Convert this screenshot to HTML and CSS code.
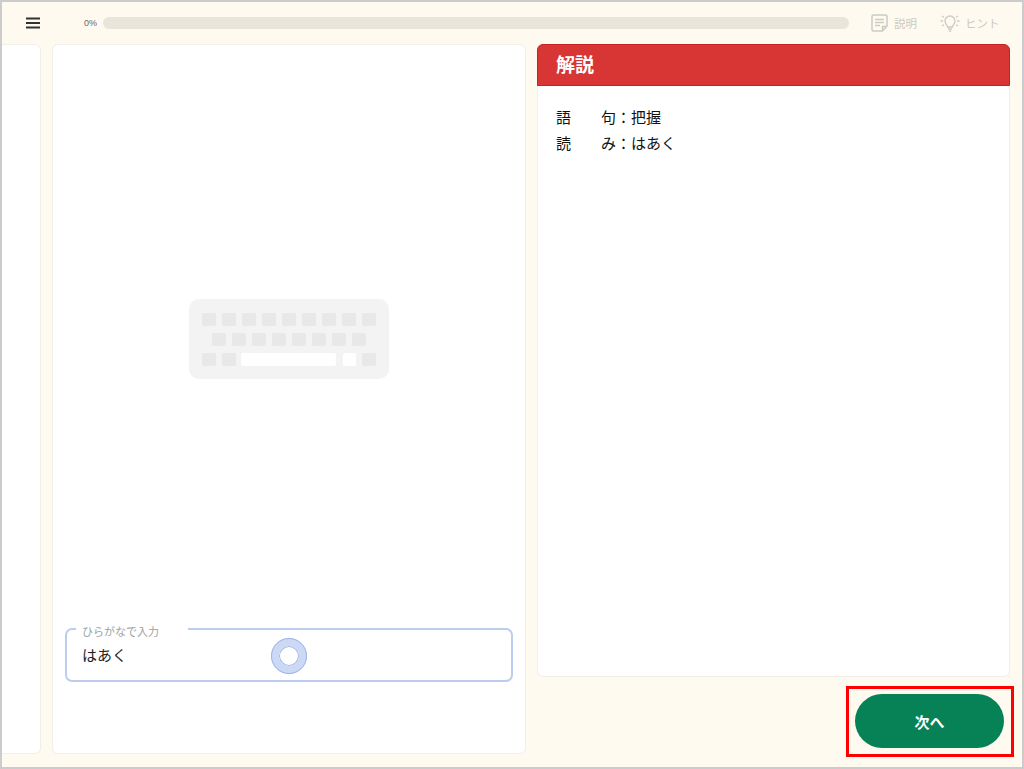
FILE: index.html
```html
<!DOCTYPE html>
<html lang="ja">
<head>
  <meta charset="UTF-8">
  <meta name="viewport" content="width=device-width, initial-scale=1.0">
  <title>解説</title>
  <link rel="stylesheet" href="styles.css">
</head>
<body>
  <div class="screen">
    <header class="top-bar">
      <button class="menu-button" aria-label="メニュー">
        <svg width="14" height="12" viewBox="0 0 14 12"><path d="M0 1.500h14M0 6h14M0 10.500h14" stroke="#333" stroke-width="1.800" fill="none"/></svg>
      </button>
      <span class="progress-label">0%</span>
      <div class="progress-track"></div>
      <div class="tool tool-note">
        <svg width="17" height="18" viewBox="0 0 17 18" fill="none" stroke="#cbcbc2" stroke-width="1.500"><path d="M2.500 1h12a1.500 1.500 0 0 1 1.500 1.500V12l-4.500 5H2.500A1.500 1.500 0 0 1 1 15.500v-13A1.500 1.500 0 0 1 2.500 1z"/><path d="M4 5.500h9M4 8.500h9M4 11.500h5"/><path d="M11.500 17v-4.500H16"/></svg>
        <span>説明</span>
      </div>
      <div class="tool tool-hint">
        <svg width="20" height="18" viewBox="0 0 20 18" fill="none" stroke="#cbcbc2" stroke-width="1.300"><path d="M7.500 13c0-2-2.500-3-2.500-6a5 5 0 0 1 10 0c0 3-2.500 4-2.500 6z"/><path d="M8 15h4M8.800 17h2.400" stroke-width="1.500"/><path d="M0.500 7h2.500M17 7h2.500M2 2l2 1.300M18 2l-2 1.300M2 12l2-1.300M18 12l-2-1.300"/></svg>
        <span>ヒント</span>
      </div>
    </header>

    <main class="content">
      <section class="panel panel-prev"></section>

      <section class="panel panel-input">
        <div class="keyboard-area">
          <svg width="200" height="80" viewBox="0 0 200 80">
            <rect width="200" height="80" rx="10" fill="#f3f3f3"/>
            <g fill="#e8e8e8">
              <rect x="13" y="14" width="14" height="13" rx="2"/>
              <rect x="33" y="14" width="14" height="13" rx="2"/>
              <rect x="53" y="14" width="14" height="13" rx="2"/>
              <rect x="73" y="14" width="14" height="13" rx="2"/>
              <rect x="93" y="14" width="14" height="13" rx="2"/>
              <rect x="113" y="14" width="14" height="13" rx="2"/>
              <rect x="133" y="14" width="14" height="13" rx="2"/>
              <rect x="153" y="14" width="14" height="13" rx="2"/>
              <rect x="173" y="14" width="14" height="13" rx="2"/>
              <rect x="23" y="34" width="14" height="13" rx="2"/>
              <rect x="43" y="34" width="14" height="13" rx="2"/>
              <rect x="63" y="34" width="14" height="13" rx="2"/>
              <rect x="83" y="34" width="14" height="13" rx="2"/>
              <rect x="103" y="34" width="14" height="13" rx="2"/>
              <rect x="123" y="34" width="14" height="13" rx="2"/>
              <rect x="143" y="34" width="14" height="13" rx="2"/>
              <rect x="163" y="34" width="14" height="13" rx="2"/>
              <rect x="13" y="54" width="14" height="13" rx="2"/>
              <rect x="33" y="54" width="14" height="13" rx="2"/>
              <rect x="173" y="54" width="14" height="13" rx="2"/>
            </g>
            <rect x="52" y="54" width="95" height="13" rx="2" fill="#fff"/>
            <rect x="154" y="54" width="13" height="13" rx="2" fill="#fff"/>
          </svg>
        </div>
        <fieldset class="answer-field">
          <legend>ひらがなで入力</legend>
          <div class="answer-text">はあく</div>
          <span class="touch-point"></span>
        </fieldset>
      </section>

      <div class="side-column">
        <section class="panel panel-explain">
          <h2>解説</h2>
          <div class="explain-body">
            <p>語　　句：把握</p>
            <p>読　　み：はあく</p>
          </div>
        </section>
        <div class="next-row">
          <div class="next-highlight">
            <button class="next-button">次へ</button>
          </div>
        </div>
      </div>
    </main>
  </div>
</body>
</html>
```

FILE: styles.css
```css
* {
  box-sizing: border-box;
}
body {
  margin: 0;
  font-family: "Noto Sans CJK JP", "Noto Sans", sans-serif;
  color: #222;
}
.screen {
  width: 1024px;
  height: 769px;
  border: 2px solid #cccccc;
  background-color: #fffaf0;
  display: flex;
  flex-direction: column;
  overflow: hidden;
}
.top-bar {
  height: 42px;
  flex-shrink: 0;
  display: flex;
  align-items: center;
  padding-left: 24px;
}
.menu-button {
  width: 14px;
  height: 12px;
  padding: 0;
  border: none;
  background: none;
  display: flex;
}
.progress-label {
  margin-left: 44px;
  width: 19px;
  font-family: "Liberation Sans", sans-serif;
  font-size: 9px;
  color: #666;
}
.progress-track {
  width: 746px;
  height: 12px;
  border-radius: 6px;
  background-color: #e8e6da;
}
.tool {
  display: flex;
  align-items: center;
  font-size: 11.5px;
  color: #cbcbc2;
}
.tool-note {
  margin-left: 22px;
  gap: 6px;
}
.tool-hint {
  margin-left: 23px;
  gap: 5px;
}
.content {
  flex: 1;
  display: flex;
  gap: 11px;
  padding-bottom: 13px;
  min-height: 0;
}
.panel {
  background-color: #fff;
  border: 1px solid #f0efe8;
  border-radius: 6px;
}
.panel-prev {
  width: 39px;
  border-left: none;
  border-radius: 0 6px 6px 0;
}
.panel-input {
  width: 474px;
  display: flex;
  flex-direction: column;
  padding: 0 12px 71px;
}
.keyboard-area {
  flex: 1;
  display: flex;
  justify-content: center;
  align-items: center;
  padding-top: 12px;
}
.answer-field {
  position: relative;
  height: 61px;
  margin: 0;
  padding: 0 15px;
  border: 2px solid #bccdf0;
  border-radius: 7px;
}
.answer-field legend {
  padding: 5px 29px 0 6px;
  margin-left: -6px;
  font-size: 11px;
  line-height: 11px;
  color: #9aa5a0;
}
.answer-text {
  margin-top: 7px;
  font-size: 15px;
  line-height: 22px;
  color: #222;
}
.touch-point {
  position: absolute;
  left: 204px;
  top: 1px;
  width: 36px;
  height: 36px;
  border-radius: 50%;
  border: 8px solid #ccd9f5;
  outline: 1px solid #9db4e8;
  outline-offset: -1px;
  background-color: #fff;
  box-shadow: inset 0 0 0 1px #9db4e8;
}
.side-column {
  width: 473px;
  display: flex;
  flex-direction: column;
}
.panel-explain {
  flex-shrink: 0;
  height: 633px;
}
.panel-explain h2 {
  margin: -1px -1px 0;
  height: 42px;
  padding-left: 18px;
  background-color: #d83535;
  border: 1px solid #cc1f24;
  border-radius: 6px 6px 0 0;
  color: #fff;
  font-size: 19px;
  line-height: 37px;
  font-weight: 700;
}
.explain-body {
  padding: 18px 18px;
}
.explain-body p {
  margin: 0;
  font-size: 15px;
  line-height: 26px;
  color: #111;
}
.next-row {
  flex-shrink: 0;
  display: flex;
  justify-content: flex-end;
  margin-top: 9px;
  margin-right: -4px;
}
.next-highlight {
  width: 168px;
  height: 71px;
  border: 3px solid #f00;
  padding: 5px 7px 6px 6px;
}
.next-button {
  width: 100%;
  height: 100%;
  padding: 0;
  border: none;
  border-radius: 27px;
  background-color: #068256;
  color: #fff;
  font-family: inherit;
  font-size: 15px;
  font-weight: 700;
}
```
